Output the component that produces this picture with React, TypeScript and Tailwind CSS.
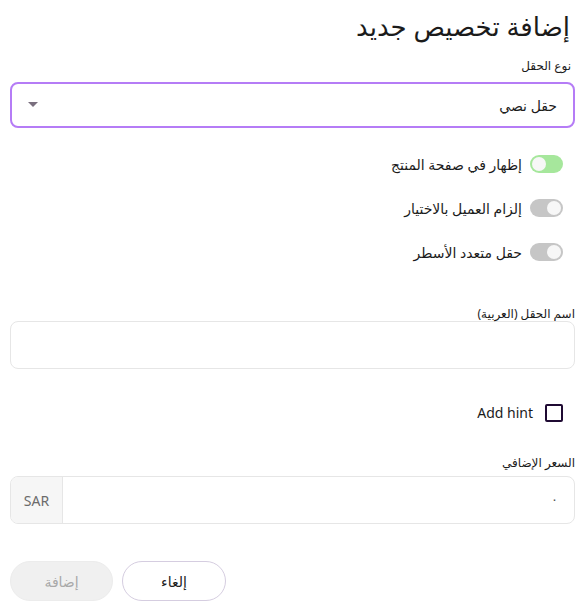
import React from "react";

function Toggle({ on }: { on: boolean }) {
  return (
    <div
      className={`relative w-[33px] h-[18px] rounded-full flex items-center px-[2px] ${
        on ? "bg-[#a6e79c] justify-start" : "bg-[#c6c6c6] justify-start"
      }`}
    >
      <div
        className={`w-[14px] h-[14px] rounded-full bg-[#f7f7f7] ${on ? "mr-auto" : "ml-auto"}`}
      />
    </div>
  );
}

export default function App() {
  const font = { fontFamily: '"Noto Sans", "DejaVu Sans", sans-serif' };
  return (
    <div dir="rtl" className="w-[585px] h-[606px] bg-white text-[#1b1b1b] px-[10px]" style={font}>
      <h1 className="text-[26px] leading-none pt-[13px] pr-[5px] font-normal">إضافة تخصيص جديد</h1>
      <div className="text-[12px] mt-[21px] pr-[4px] leading-none">نوع الحقل</div>
      <div className="mt-[10px] h-[46px] border-2 border-[#b57cf6] rounded-[8px] flex items-center justify-between pr-[16px] pl-[16px]">
        <span className="text-[14px]">حقل نصي</span>
        <svg width="10" height="6" viewBox="0 0 10 6"><path d="M0 0 L10 0 L5 5 Z" fill="#7a6f7e" /></svg>
      </div>

      <div className="flex flex-col gap-[26px] mt-[27px] pr-[12px]">
        <div className="flex items-center gap-[8px] h-[18px]">
          <Toggle on={true} />
          <span className="text-[14px]">إظهار في صفحة المنتج</span>
        </div>
        <div className="flex items-center gap-[8px] h-[18px]">
          <Toggle on={false} />
          <span className="text-[14px]">إلزام العميل بالاختيار</span>
        </div>
        <div className="flex items-center gap-[8px] h-[18px]">
          <Toggle on={false} />
          <span className="text-[14px]">حقل متعدد الأسطر</span>
        </div>
      </div>

      <div className="text-[12px] mt-[47px] leading-none">اسم الحقل (العربية)</div>
      <div className="mt-[1px] h-[48px] border border-[#e6e6e6] rounded-[8px]" />

      <div className="flex items-center gap-[12px] mt-[33px] pr-[12px]">
        <div className="w-[18px] h-[18px] border-2 border-[#1f0a33] rounded-[2px]" />
        <span className="text-[14px]" dir="ltr">Add hint</span>
      </div>

      <div className="text-[12px] mt-[34px] leading-none">السعر الإضافي</div>
      <div className="mt-[7px] h-[48px] border border-[#e6e6e6] rounded-[8px] flex overflow-hidden">
        <div className="flex-1 flex items-center pr-[16px] text-[13px] text-[#555]">٠</div>
        <div className="w-[52px] bg-[#f6f6f6] border-r border-[#e6e6e6] flex items-center justify-center text-[14px] text-[#6b6b6b]">SAR</div>
      </div>

      <div className="flex justify-end gap-[9px] mt-[37px]">
        <button className="w-[104px] h-[40px] rounded-full border border-[#d5cde0] bg-white text-[14px] text-[#1b1b1b]">إلغاء</button>
        <button className="w-[103px] h-[40px] rounded-full border border-[#ececec] bg-[#f0f0f0] text-[14px] text-[#a9a9a9]">إضافة</button>
      </div>
    </div>
  );
}
